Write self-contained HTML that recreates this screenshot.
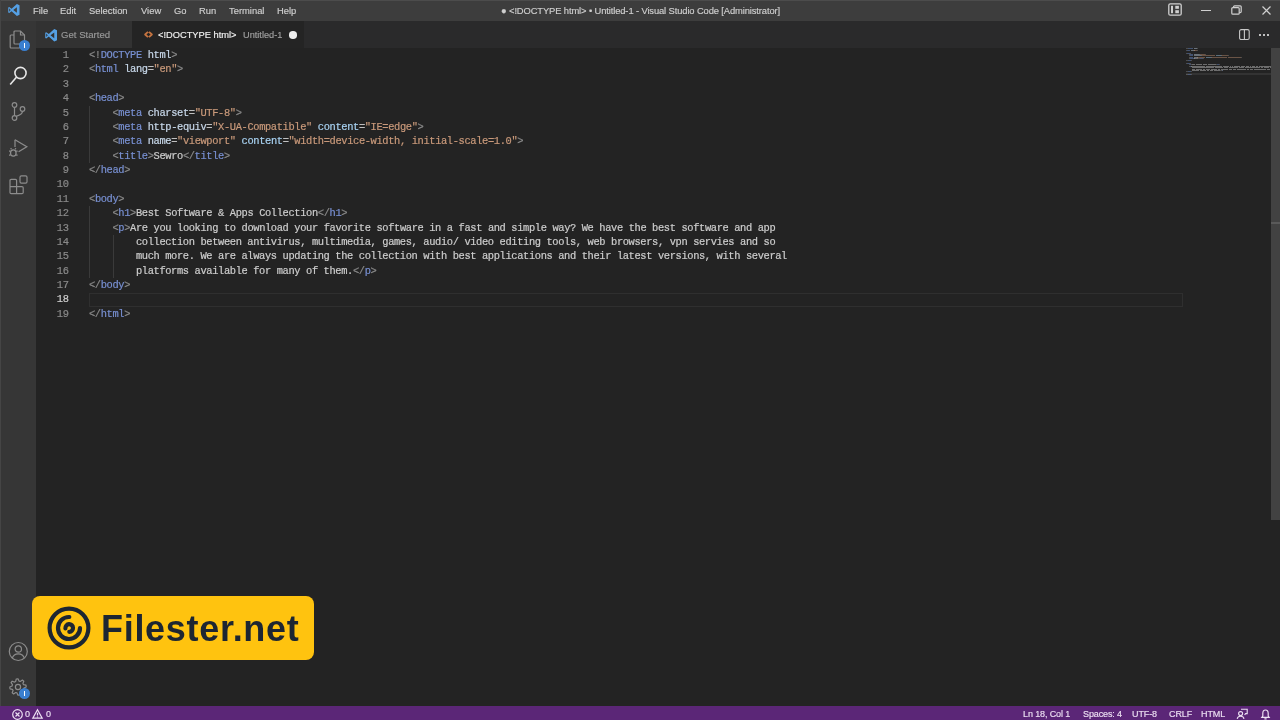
<!DOCTYPE html>
<html><head><meta charset="utf-8">
<style>
*{margin:0;padding:0;box-sizing:border-box}
html,body{width:1280px;height:720px;overflow:hidden;background:#232323;font-family:"Liberation Sans",sans-serif}
.abs{position:absolute}
svg{position:absolute;overflow:visible}
.menu,#ttl,.tabt,.ln,.num,.st,#logotxt{will-change:transform}
.ln,.num{-webkit-text-stroke:0.2px}
.menu,#ttl,.tabt,.st{-webkit-text-stroke:0.15px}
#title{position:absolute;left:0;top:0;width:1280px;height:21px;background:#3d3d3d;border-top:1px solid #4c4c4c}
.menu{position:absolute;top:4.5px;font-size:9.4px;color:#cfcfcf;line-height:12px}
#ttl{position:absolute;top:4.5px;left:501px;font-size:9.4px;letter-spacing:-0.12px;color:#cfcfcf;line-height:12px;white-space:nowrap}
#act{position:absolute;left:0;top:21px;width:37px;height:685px;background:#363636;border-right:1px solid #2d2d2d}
#actl{position:absolute;left:0;top:0;width:1px;height:706px;background:#454545}
#tabs{position:absolute;left:36px;top:21px;width:1244px;height:27px;background:#2a2a2b}
#tab1{position:absolute;left:36px;top:21px;width:96px;height:27px;background:#323232}
#tab2{position:absolute;left:132px;top:21px;width:172px;height:27px;background:#242424}
.tabt{position:absolute;top:29px;font-size:10.2px;line-height:12px;white-space:nowrap}
#editor{position:absolute;left:36px;top:48px;width:1244px;height:658px;background:#232323}
.ln{position:absolute;left:89px;font-family:"Liberation Mono",monospace;font-size:10.4px;letter-spacing:-0.37px;line-height:14.375px;height:14.375px;white-space:pre;color:#d4d4d4}
.num{position:absolute;left:38px;width:30.5px;text-align:right;font-family:"Liberation Mono",monospace;font-size:10.4px;letter-spacing:-0.37px;line-height:14.375px;color:#8a8a8a}
.num.cur{color:#d0d0d0}
.b{color:#8a8a8a}.t{color:#7890d2}.a{color:#c8d8ea}.a2{color:#a8d2f2}.s{color:#c9997a}.e{color:#c0c0c0}.x{color:#cdcdcd}
#status{position:absolute;left:0;top:706px;width:1280px;height:14px;background:#5b2677}
.st{position:absolute;top:709px;font-size:9px;letter-spacing:-0.12px;line-height:11px;color:#ecdff2;white-space:nowrap}
#curline{position:absolute;left:88.5px;top:292.5px;width:1094px;height:14.5px;border:1px solid #2f2f2f}
.guide{position:absolute;width:1px;background:#3a3a3a}
#sb{position:absolute;left:1271px;top:48px;width:9px;height:472px;background:#424242}
#sbline{position:absolute;left:1271px;top:221.5px;width:9px;height:2px;background:#5a5a5a}
#logo{position:absolute;left:32px;top:596px;width:282px;height:64px;background:#ffc30f;border-radius:8px}
#logotxt{position:absolute;left:101px;top:604px;font-size:36px;letter-spacing:0.7px;font-weight:bold;color:#1d2632;line-height:50px;white-space:nowrap}
.mm{position:absolute;height:1px;opacity:0.45}
</style></head><body>
<div id="title"></div>
<svg style="left:8px;top:3.8px" width="12" height="12" viewBox="0 0 100 100">
<path d="M96 10 L74 0 L30 40 L10 25 L2 29 L2 71 L10 75 L30 60 L74 100 L96 90 Z M74 27 L74 73 L44 50 Z M10 36 L22 50 L10 64 Z" fill="#55a0e4" fill-rule="evenodd"/>
</svg>
<div class="menu" style="left:33px">File</div>
<div class="menu" style="left:60px">Edit</div>
<div class="menu" style="left:88.5px">Selection</div>
<div class="menu" style="left:140.5px">View</div>
<div class="menu" style="left:173.5px">Go</div>
<div class="menu" style="left:199px">Run</div>
<div class="menu" style="left:228.5px">Terminal</div>
<div class="menu" style="left:277px">Help</div>
<div id="ttl">● &lt;!DOCTYPE html&gt; • Untitled-1 - Visual Studio Code [Administrator]</div>
<!-- window controls -->
<svg style="left:1168px;top:3px" width="14" height="13" viewBox="0 0 14 13" fill="none" stroke="#cfcfcf" stroke-width="1.3">
<rect x="0.8" y="0.8" width="12.4" height="11.4" rx="1.5"/><rect x="3" y="2.8" width="2" height="7.4" fill="#cfcfcf" stroke="none"/><rect x="7.3" y="2.8" width="3.6" height="3" fill="#cfcfcf" stroke="none"/><rect x="7.3" y="7.2" width="3.6" height="3" fill="#cfcfcf" stroke="none"/>
</svg>
<div class="abs" style="left:1201px;top:9.5px;width:9.5px;height:1.2px;background:#cfcfcf"></div>
<svg style="left:1231px;top:5px" width="11" height="10" viewBox="0 0 11 10" fill="none" stroke="#cfcfcf" stroke-width="1.2">
<rect x="0.8" y="2.6" width="7.4" height="6.6" rx="1"/><path d="M2.6 2.6 V1.8 Q2.6 0.8 3.6 0.8 H9.2 Q10.2 0.8 10.2 1.8 V6.6 Q10.2 7.6 9.2 7.6 H8.2"/>
</svg>
<svg style="left:1262px;top:5.5px" width="9" height="9" viewBox="0 0 9 9" stroke="#cfcfcf" stroke-width="1.2"><path d="M0.5 0.5 L8.5 8.5 M8.5 0.5 L0.5 8.5"/></svg>

<div id="act"></div>
<div id="actl"></div>
<div id="tabs"></div>
<div id="tab1"></div>
<div id="tab2"></div>
<svg style="left:44.5px;top:29px" width="12.5" height="12.5" viewBox="0 0 100 100">
<path d="M96 10 L74 0 L30 40 L10 25 L2 29 L2 71 L10 75 L30 60 L74 100 L96 90 Z M74 27 L74 73 L44 50 Z M10 36 L22 50 L10 64 Z" fill="#55a0e4" fill-rule="evenodd"/>
</svg>
<div class="tabt" style="left:61px;color:#999999;font-size:9.6px">Get Started</div>
<svg style="left:143.5px;top:30.8px" width="9" height="7" viewBox="0 0 9 7" fill="none" stroke="#c47340" stroke-width="1.8" stroke-linejoin="round"><path d="M4 0.9 L1.1 3.5 L4 6.1 M5 0.9 L7.9 3.5 L5 6.1"/></svg>
<div class="tabt" style="left:158px;color:#f2f2f2;font-size:9.3px">&lt;!DOCTYPE html&gt;</div>
<div class="tabt" style="left:243px;color:#a0a0a0;font-size:9.2px">Untitled-1</div>
<div class="abs" style="left:289px;top:31px;width:7.5px;height:7.5px;border-radius:50%;background:#eeeeee"></div>
<!-- split + more -->
<svg style="left:1239.2px;top:28.8px" width="11" height="11" viewBox="0 0 11 11" fill="none" stroke="#c8c8c8" stroke-width="1.1"><rect x="0.6" y="0.6" width="9.6" height="9.9" rx="1.6"/><path d="M5.4 0.6 V10.5"/></svg>
<div class="abs" style="left:1259.2px;top:34px;width:1.8px;height:1.8px;background:#c0c0c0"></div>
<div class="abs" style="left:1263.1px;top:34px;width:1.8px;height:1.8px;background:#c0c0c0"></div>
<div class="abs" style="left:1267px;top:34px;width:1.8px;height:1.8px;background:#c0c0c0"></div>

<!-- activity icons -->
<svg style="left:9px;top:30px" width="20" height="20" viewBox="0 0 20 20" fill="none" stroke="#8c8c8c" stroke-width="1.2">
<path d="M5.5 1 H11.5 L15.5 5 V13 Q15.5 14 14.5 14 H6 Q5 14 5 13 V2 Q5 1 6 1 Z"/><path d="M11.5 1 V5 H15.5"/><path d="M5 5 H2 Q1.2 5 1.2 6 V17 Q1.2 18 2 18 H10 Q11 18 11 17 V14"/>
</svg>
<div class="abs" style="left:19px;top:40px;width:11px;height:11px;border-radius:50%;background:#3a7fd0"></div>
<div class="abs" style="left:23.8px;top:43px;width:1.4px;height:5px;background:#ffffff"></div>
<svg style="left:9px;top:66px" width="18" height="20" viewBox="0 0 18 20" fill="none" stroke="#e6e6e6" stroke-width="1.6">
<circle cx="11.5" cy="7" r="5.6"/><path d="M7.6 11 L1.2 18.6"/>
</svg>
<svg style="left:10px;top:100px" width="16" height="22" viewBox="0 0 16 22" fill="none" stroke="#8c8c8c" stroke-width="1.2">
<circle cx="4.5" cy="5" r="2.3"/><circle cx="4.5" cy="18" r="2.3"/><circle cx="12.5" cy="9" r="2.3"/><path d="M4.5 7.3 V15.7 M12.5 11.3 Q12.5 14.5 6.2 16.4"/>
</svg>
<svg style="left:7.2px;top:137px" width="22" height="20" viewBox="0 0 22 20" fill="none" stroke="#8c8c8c" stroke-width="1.25">
<path d="M8 2.8 L19.8 9.8 L11.6 14.8"/><path d="M8 2.8 V10"/><ellipse cx="6.3" cy="16" rx="2.8" ry="3.2"/><path d="M2 14 H3.5 M2 18 H3.5 M9.1 14 H10.6 M9.1 18 H10.6 M4.5 12.2 L3.6 11.3 M8.1 12.2 L9 11.3"/>
</svg>
<svg style="left:9px;top:175px" width="20" height="20" viewBox="0 0 20 20" fill="none" stroke="#8c8c8c" stroke-width="1.2">
<path d="M1 12 V5.6 Q1 4.4 2.2 4.4 H6.4 Q7.6 4.4 7.6 5.6 V18.6 H2.2 Q1 18.6 1 17.4 Z M1 11.6 H13 Q14.2 11.6 14.2 12.8 V17.4 Q14.2 18.6 13 18.6 H7.6"/><rect x="11" y="0.8" width="7" height="7.4" rx="1.4"/>
</svg>
<svg style="left:8px;top:641px" width="21" height="21" viewBox="0 0 21 21" fill="none" stroke="#8c8c8c" stroke-width="1.2">
<circle cx="10.3" cy="10.5" r="9"/><circle cx="10.3" cy="8" r="3.2"/><path d="M4.3 17.2 Q5.5 12.8 10.3 12.8 Q15.1 12.8 16.3 17.2"/>
</svg>
<svg style="left:7.5px;top:677px" width="20" height="20" viewBox="0 0 20 20" fill="none" stroke="#8c8c8c" stroke-width="1.2" stroke-linejoin="round">
<path d="M15.54 7.70 L18.00 8.21 L18.20 10.00 L15.91 11.03 L15.54 12.30 L16.92 14.39 L15.80 15.80 L13.45 14.91 L12.30 15.54 L11.79 18.00 L10.00 18.20 L8.97 15.91 L7.70 15.54 L5.61 16.92 L4.20 15.80 L5.09 13.45 L4.46 12.30 L2.00 11.79 L1.80 10.00 L4.09 8.97 L4.46 7.70 L3.08 5.61 L4.20 4.20 L6.55 5.09 L7.70 4.46 L8.21 2.00 L10.00 1.80 L11.03 4.09 L12.30 4.46 L14.39 3.08 L15.80 4.20 L14.91 6.55 Z"/><circle cx="10" cy="10" r="2.6"/>
</svg>
<div class="abs" style="left:19px;top:688px;width:11px;height:11px;border-radius:50%;background:#3a7fd0"></div>
<div class="abs" style="left:23.8px;top:691px;width:1.4px;height:5px;background:#ffffff"></div>

<div id="editor"></div>
<div id="curline"></div>
<div class="guide" style="left:89px;top:105.5px;height:57.5px"></div>
<div class="guide" style="left:89px;top:206px;height:72px"></div>
<div class="guide" style="left:112.5px;top:235px;height:43px"></div>
<div class="num" style="top:48.100px">1</div>
<div class="num" style="top:62.475px">2</div>
<div class="num" style="top:76.850px">3</div>
<div class="num" style="top:91.225px">4</div>
<div class="num" style="top:105.600px">5</div>
<div class="num" style="top:119.975px">6</div>
<div class="num" style="top:134.350px">7</div>
<div class="num" style="top:148.725px">8</div>
<div class="num" style="top:163.100px">9</div>
<div class="num" style="top:177.475px">10</div>
<div class="num" style="top:191.850px">11</div>
<div class="num" style="top:206.225px">12</div>
<div class="num" style="top:220.600px">13</div>
<div class="num" style="top:234.975px">14</div>
<div class="num" style="top:249.350px">15</div>
<div class="num" style="top:263.725px">16</div>
<div class="num" style="top:278.100px">17</div>
<div class="num cur" style="top:292.475px">18</div>
<div class="num" style="top:306.850px">19</div>
<div class="ln" style="top:48.100px"><span class="b">&lt;!</span><span class="t">DOCTYPE</span><span class="x"> </span><span class="a">html</span><span class="b">&gt;</span></div>
<div class="ln" style="top:62.475px"><span class="b">&lt;</span><span class="t">html</span><span class="x"> </span><span class="a">lang</span><span class="e">=</span><span class="s">"en"</span><span class="b">&gt;</span></div>
<div class="ln" style="top:76.850px"></div>
<div class="ln" style="top:91.225px"><span class="b">&lt;</span><span class="t">head</span><span class="b">&gt;</span></div>
<div class="ln" style="top:105.600px"><span class="x">    </span><span class="b">&lt;</span><span class="t">meta</span><span class="x"> </span><span class="a">charset</span><span class="e">=</span><span class="s">"UTF-8"</span><span class="b">&gt;</span></div>
<div class="ln" style="top:119.975px"><span class="x">    </span><span class="b">&lt;</span><span class="t">meta</span><span class="x"> </span><span class="a">http-equiv</span><span class="e">=</span><span class="s">"X-UA-Compatible"</span><span class="x"> </span><span class="a2">content</span><span class="e">=</span><span class="s">"IE=edge"</span><span class="b">&gt;</span></div>
<div class="ln" style="top:134.350px"><span class="x">    </span><span class="b">&lt;</span><span class="t">meta</span><span class="x"> </span><span class="a">name</span><span class="e">=</span><span class="s">"viewport"</span><span class="x"> </span><span class="a2">content</span><span class="e">=</span><span class="s">"width=device-width, initial-scale=1.0"</span><span class="b">&gt;</span></div>
<div class="ln" style="top:148.725px"><span class="x">    </span><span class="b">&lt;</span><span class="t">title</span><span class="b">&gt;</span><span class="x">Sewro</span><span class="b">&lt;/</span><span class="t">title</span><span class="b">&gt;</span></div>
<div class="ln" style="top:163.100px"><span class="b">&lt;/</span><span class="t">head</span><span class="b">&gt;</span></div>
<div class="ln" style="top:177.475px"></div>
<div class="ln" style="top:191.850px"><span class="b">&lt;</span><span class="t">body</span><span class="b">&gt;</span></div>
<div class="ln" style="top:206.225px"><span class="x">    </span><span class="b">&lt;</span><span class="t">h1</span><span class="b">&gt;</span><span class="x">Best Software &amp; Apps Collection</span><span class="b">&lt;/</span><span class="t">h1</span><span class="b">&gt;</span></div>
<div class="ln" style="top:220.600px"><span class="x">    </span><span class="b">&lt;</span><span class="t">p</span><span class="b">&gt;</span><span class="x">Are you looking to download your favorite software in a fast and simple way? We have the best software and app</span></div>
<div class="ln" style="top:234.975px"><span class="x">        collection between antivirus, multimedia, games, audio/ video editing tools, web browsers, vpn servies and so</span></div>
<div class="ln" style="top:249.350px"><span class="x">        much more. We are always updating the collection with best applications and their latest versions, with several</span></div>
<div class="ln" style="top:263.725px"><span class="x">        platforms available for many of them.</span><span class="b">&lt;/</span><span class="t">p</span><span class="b">&gt;</span></div>
<div class="ln" style="top:278.100px"><span class="b">&lt;/</span><span class="t">body</span><span class="b">&gt;</span></div>
<div class="ln" style="top:292.475px"></div>
<div class="ln" style="top:306.850px"><span class="b">&lt;/</span><span class="t">html</span><span class="b">&gt;</span></div>

<div class="abs" style="left:1186px;top:73.3px;width:85px;height:1.5px;background:#333333"></div>
<div class="mm" style="left:1186.00px;top:48.20px;width:1.51px;background:#808080"></div>
<div class="mm" style="left:1187.51px;top:48.20px;width:5.30px;background:#6a8fd0"></div>
<div class="mm" style="left:1193.57px;top:48.20px;width:3.03px;background:#c0d0e0"></div>
<div class="mm" style="left:1196.60px;top:48.20px;width:0.76px;background:#808080"></div>
<div class="mm" style="left:1186.00px;top:49.65px;width:0.76px;background:#808080"></div>
<div class="mm" style="left:1186.76px;top:49.65px;width:3.03px;background:#6a8fd0"></div>
<div class="mm" style="left:1190.54px;top:49.65px;width:3.03px;background:#c0d0e0"></div>
<div class="mm" style="left:1193.57px;top:49.65px;width:0.76px;background:#c0c0c0"></div>
<div class="mm" style="left:1194.33px;top:49.65px;width:3.03px;background:#c09070"></div>
<div class="mm" style="left:1197.36px;top:49.65px;width:0.76px;background:#808080"></div>
<div class="mm" style="left:1186.00px;top:52.55px;width:0.76px;background:#808080"></div>
<div class="mm" style="left:1186.76px;top:52.55px;width:3.03px;background:#6a8fd0"></div>
<div class="mm" style="left:1189.79px;top:52.55px;width:0.76px;background:#808080"></div>
<div class="mm" style="left:1189.03px;top:54.00px;width:0.76px;background:#808080"></div>
<div class="mm" style="left:1189.79px;top:54.00px;width:3.03px;background:#6a8fd0"></div>
<div class="mm" style="left:1193.57px;top:54.00px;width:5.30px;background:#c0d0e0"></div>
<div class="mm" style="left:1198.87px;top:54.00px;width:0.76px;background:#c0c0c0"></div>
<div class="mm" style="left:1199.63px;top:54.00px;width:5.30px;background:#c09070"></div>
<div class="mm" style="left:1204.92px;top:54.00px;width:0.76px;background:#808080"></div>
<div class="mm" style="left:1189.03px;top:55.45px;width:0.76px;background:#808080"></div>
<div class="mm" style="left:1189.79px;top:55.45px;width:3.03px;background:#6a8fd0"></div>
<div class="mm" style="left:1193.57px;top:55.45px;width:7.57px;background:#c0d0e0"></div>
<div class="mm" style="left:1201.14px;top:55.45px;width:0.76px;background:#c0c0c0"></div>
<div class="mm" style="left:1201.90px;top:55.45px;width:12.87px;background:#c09070"></div>
<div class="mm" style="left:1215.52px;top:55.45px;width:5.30px;background:#a0cce8"></div>
<div class="mm" style="left:1220.82px;top:55.45px;width:0.76px;background:#c0c0c0"></div>
<div class="mm" style="left:1221.58px;top:55.45px;width:6.81px;background:#c09070"></div>
<div class="mm" style="left:1228.39px;top:55.45px;width:0.76px;background:#808080"></div>
<div class="mm" style="left:1189.03px;top:56.90px;width:0.76px;background:#808080"></div>
<div class="mm" style="left:1189.79px;top:56.90px;width:3.03px;background:#6a8fd0"></div>
<div class="mm" style="left:1193.57px;top:56.90px;width:3.03px;background:#c0d0e0"></div>
<div class="mm" style="left:1196.60px;top:56.90px;width:0.76px;background:#c0c0c0"></div>
<div class="mm" style="left:1197.36px;top:56.90px;width:7.57px;background:#c09070"></div>
<div class="mm" style="left:1205.68px;top:56.90px;width:5.30px;background:#a0cce8"></div>
<div class="mm" style="left:1210.98px;top:56.90px;width:0.76px;background:#c0c0c0"></div>
<div class="mm" style="left:1211.74px;top:56.90px;width:15.14px;background:#c09070"></div>
<div class="mm" style="left:1227.63px;top:56.90px;width:13.63px;background:#c09070"></div>
<div class="mm" style="left:1241.26px;top:56.90px;width:0.76px;background:#808080"></div>
<div class="mm" style="left:1189.03px;top:58.35px;width:0.76px;background:#808080"></div>
<div class="mm" style="left:1189.79px;top:58.35px;width:3.79px;background:#6a8fd0"></div>
<div class="mm" style="left:1193.57px;top:58.35px;width:0.76px;background:#808080"></div>
<div class="mm" style="left:1194.33px;top:58.35px;width:3.79px;background:#c8c8c8"></div>
<div class="mm" style="left:1198.11px;top:58.35px;width:1.51px;background:#808080"></div>
<div class="mm" style="left:1199.63px;top:58.35px;width:3.79px;background:#6a8fd0"></div>
<div class="mm" style="left:1203.41px;top:58.35px;width:0.76px;background:#808080"></div>
<div class="mm" style="left:1186.00px;top:59.80px;width:1.51px;background:#808080"></div>
<div class="mm" style="left:1187.51px;top:59.80px;width:3.03px;background:#6a8fd0"></div>
<div class="mm" style="left:1190.54px;top:59.80px;width:0.76px;background:#808080"></div>
<div class="mm" style="left:1186.00px;top:62.70px;width:0.76px;background:#808080"></div>
<div class="mm" style="left:1186.76px;top:62.70px;width:3.03px;background:#6a8fd0"></div>
<div class="mm" style="left:1189.79px;top:62.70px;width:0.76px;background:#808080"></div>
<div class="mm" style="left:1189.03px;top:64.15px;width:0.76px;background:#808080"></div>
<div class="mm" style="left:1189.79px;top:64.15px;width:1.51px;background:#6a8fd0"></div>
<div class="mm" style="left:1191.30px;top:64.15px;width:0.76px;background:#808080"></div>
<div class="mm" style="left:1192.06px;top:64.15px;width:3.03px;background:#c8c8c8"></div>
<div class="mm" style="left:1195.84px;top:64.15px;width:6.06px;background:#c8c8c8"></div>
<div class="mm" style="left:1202.65px;top:64.15px;width:0.76px;background:#c8c8c8"></div>
<div class="mm" style="left:1204.17px;top:64.15px;width:3.03px;background:#c8c8c8"></div>
<div class="mm" style="left:1207.95px;top:64.15px;width:7.57px;background:#c8c8c8"></div>
<div class="mm" style="left:1215.52px;top:64.15px;width:1.51px;background:#808080"></div>
<div class="mm" style="left:1217.04px;top:64.15px;width:1.51px;background:#6a8fd0"></div>
<div class="mm" style="left:1218.55px;top:64.15px;width:0.76px;background:#808080"></div>
<div class="mm" style="left:1189.03px;top:65.60px;width:0.76px;background:#808080"></div>
<div class="mm" style="left:1189.79px;top:65.60px;width:0.76px;background:#6a8fd0"></div>
<div class="mm" style="left:1190.54px;top:65.60px;width:0.76px;background:#808080"></div>
<div class="mm" style="left:1191.30px;top:65.60px;width:2.27px;background:#c8c8c8"></div>
<div class="mm" style="left:1194.33px;top:65.60px;width:2.27px;background:#c8c8c8"></div>
<div class="mm" style="left:1197.36px;top:65.60px;width:5.30px;background:#c8c8c8"></div>
<div class="mm" style="left:1203.41px;top:65.60px;width:1.51px;background:#c8c8c8"></div>
<div class="mm" style="left:1205.68px;top:65.60px;width:6.06px;background:#c8c8c8"></div>
<div class="mm" style="left:1212.49px;top:65.60px;width:3.03px;background:#c8c8c8"></div>
<div class="mm" style="left:1216.28px;top:65.60px;width:6.06px;background:#c8c8c8"></div>
<div class="mm" style="left:1223.09px;top:65.60px;width:6.06px;background:#c8c8c8"></div>
<div class="mm" style="left:1229.91px;top:65.60px;width:1.51px;background:#c8c8c8"></div>
<div class="mm" style="left:1232.18px;top:65.60px;width:0.76px;background:#c8c8c8"></div>
<div class="mm" style="left:1233.69px;top:65.60px;width:3.03px;background:#c8c8c8"></div>
<div class="mm" style="left:1237.48px;top:65.60px;width:2.27px;background:#c8c8c8"></div>
<div class="mm" style="left:1240.50px;top:65.60px;width:4.54px;background:#c8c8c8"></div>
<div class="mm" style="left:1245.80px;top:65.60px;width:3.03px;background:#c8c8c8"></div>
<div class="mm" style="left:1249.59px;top:65.60px;width:1.51px;background:#c8c8c8"></div>
<div class="mm" style="left:1251.86px;top:65.60px;width:3.03px;background:#c8c8c8"></div>
<div class="mm" style="left:1255.64px;top:65.60px;width:2.27px;background:#c8c8c8"></div>
<div class="mm" style="left:1258.67px;top:65.60px;width:3.03px;background:#c8c8c8"></div>
<div class="mm" style="left:1262.46px;top:65.60px;width:6.06px;background:#c8c8c8"></div>
<div class="mm" style="left:1269.27px;top:65.60px;width:1.73px;background:#c8c8c8"></div>
<div class="mm" style="left:1192.06px;top:67.05px;width:7.57px;background:#c8c8c8"></div>
<div class="mm" style="left:1200.38px;top:67.05px;width:5.30px;background:#c8c8c8"></div>
<div class="mm" style="left:1206.44px;top:67.05px;width:7.57px;background:#c8c8c8"></div>
<div class="mm" style="left:1214.77px;top:67.05px;width:8.33px;background:#c8c8c8"></div>
<div class="mm" style="left:1223.85px;top:67.05px;width:4.54px;background:#c8c8c8"></div>
<div class="mm" style="left:1229.15px;top:67.05px;width:4.54px;background:#c8c8c8"></div>
<div class="mm" style="left:1234.45px;top:67.05px;width:3.79px;background:#c8c8c8"></div>
<div class="mm" style="left:1238.99px;top:67.05px;width:5.30px;background:#c8c8c8"></div>
<div class="mm" style="left:1245.05px;top:67.05px;width:4.54px;background:#c8c8c8"></div>
<div class="mm" style="left:1250.35px;top:67.05px;width:2.27px;background:#c8c8c8"></div>
<div class="mm" style="left:1253.37px;top:67.05px;width:6.81px;background:#c8c8c8"></div>
<div class="mm" style="left:1260.94px;top:67.05px;width:2.27px;background:#c8c8c8"></div>
<div class="mm" style="left:1263.97px;top:67.05px;width:5.30px;background:#c8c8c8"></div>
<div class="mm" style="left:1270.03px;top:67.05px;width:0.97px;background:#c8c8c8"></div>
<div class="mm" style="left:1192.06px;top:68.50px;width:3.03px;background:#c8c8c8"></div>
<div class="mm" style="left:1195.84px;top:68.50px;width:3.79px;background:#c8c8c8"></div>
<div class="mm" style="left:1200.38px;top:68.50px;width:1.51px;background:#c8c8c8"></div>
<div class="mm" style="left:1202.65px;top:68.50px;width:2.27px;background:#c8c8c8"></div>
<div class="mm" style="left:1205.68px;top:68.50px;width:4.54px;background:#c8c8c8"></div>
<div class="mm" style="left:1210.98px;top:68.50px;width:6.06px;background:#c8c8c8"></div>
<div class="mm" style="left:1217.79px;top:68.50px;width:2.27px;background:#c8c8c8"></div>
<div class="mm" style="left:1220.82px;top:68.50px;width:7.57px;background:#c8c8c8"></div>
<div class="mm" style="left:1229.15px;top:68.50px;width:3.03px;background:#c8c8c8"></div>
<div class="mm" style="left:1232.93px;top:68.50px;width:3.03px;background:#c8c8c8"></div>
<div class="mm" style="left:1236.72px;top:68.50px;width:9.08px;background:#c8c8c8"></div>
<div class="mm" style="left:1246.56px;top:68.50px;width:2.27px;background:#c8c8c8"></div>
<div class="mm" style="left:1249.59px;top:68.50px;width:3.79px;background:#c8c8c8"></div>
<div class="mm" style="left:1254.13px;top:68.50px;width:4.54px;background:#c8c8c8"></div>
<div class="mm" style="left:1259.43px;top:68.50px;width:6.81px;background:#c8c8c8"></div>
<div class="mm" style="left:1267.00px;top:68.50px;width:3.03px;background:#c8c8c8"></div>
<div class="mm" style="left:1270.78px;top:68.50px;width:0.22px;background:#c8c8c8"></div>
<div class="mm" style="left:1192.06px;top:69.95px;width:6.81px;background:#c8c8c8"></div>
<div class="mm" style="left:1199.63px;top:69.95px;width:6.81px;background:#c8c8c8"></div>
<div class="mm" style="left:1207.20px;top:69.95px;width:2.27px;background:#c8c8c8"></div>
<div class="mm" style="left:1210.22px;top:69.95px;width:3.03px;background:#c8c8c8"></div>
<div class="mm" style="left:1214.01px;top:69.95px;width:1.51px;background:#c8c8c8"></div>
<div class="mm" style="left:1216.28px;top:69.95px;width:3.79px;background:#c8c8c8"></div>
<div class="mm" style="left:1220.07px;top:69.95px;width:1.51px;background:#808080"></div>
<div class="mm" style="left:1221.58px;top:69.95px;width:0.76px;background:#6a8fd0"></div>
<div class="mm" style="left:1222.34px;top:69.95px;width:0.76px;background:#808080"></div>
<div class="mm" style="left:1186.00px;top:71.40px;width:1.51px;background:#808080"></div>
<div class="mm" style="left:1187.51px;top:71.40px;width:3.03px;background:#6a8fd0"></div>
<div class="mm" style="left:1190.54px;top:71.40px;width:0.76px;background:#808080"></div>
<div class="mm" style="left:1186.00px;top:74.30px;width:1.51px;background:#808080"></div>
<div class="mm" style="left:1187.51px;top:74.30px;width:3.03px;background:#6a8fd0"></div>
<div class="mm" style="left:1190.54px;top:74.30px;width:0.76px;background:#808080"></div>
<div id="sb"></div>
<div id="sbline"></div>

<div id="status"></div>
<svg style="left:11.5px;top:708.5px" width="11" height="11" viewBox="0 0 11 11" fill="none" stroke="#ecdff2" stroke-width="1.2"><circle cx="5.5" cy="5.5" r="4.8"/><path d="M3.5 3.5 L7.5 7.5 M7.5 3.5 L3.5 7.5"/></svg>
<div class="st" style="left:25px">0</div>
<svg style="left:32px;top:709px" width="11" height="10" viewBox="0 0 11 10" fill="none" stroke="#ecdff2" stroke-width="1.2"><path d="M5.5 0.8 L10.2 9.2 H0.8 Z M5.5 3.8 V6.6 M5.5 7.4 V8.2"/></svg>
<div class="st" style="left:45.5px">0</div>
<div class="st" style="left:1023px">Ln 18, Col 1</div>
<div class="st" style="left:1083px">Spaces: 4</div>
<div class="st" style="left:1132px">UTF-8</div>
<div class="st" style="left:1168.5px">CRLF</div>
<div class="st" style="left:1201px">HTML</div>
<svg style="left:1236px;top:708px" width="12" height="11" viewBox="0 0 12 11" fill="none" stroke="#ecdff2" stroke-width="1.1"><path d="M5 1.2 H11.2 V5.6 H9.6 L8.6 7"/><circle cx="4.6" cy="5.6" r="2"/><path d="M1.2 10.8 Q1.6 8.2 4.6 8.2 Q7.6 8.2 8 10.8"/></svg>
<svg style="left:1260.5px;top:708.5px" width="9" height="11" viewBox="0 0 9 11" fill="none" stroke="#ecdff2" stroke-width="1.2"><path d="M0.8 8.4 H8.2 L7.2 7 V4.4 Q7.2 1 4.5 1 Q1.8 1 1.8 4.4 V7 Z M3.4 9.8 H5.6"/></svg>

<div id="logo"></div>
<svg style="left:44.8px;top:603.6px" width="48" height="48" viewBox="-24 -24 48 48" fill="none" stroke="#1d2632" stroke-width="4.2" stroke-linecap="round">
<circle cx="0" cy="0" r="19.4"/><path d="M0.3 -11 A11 11 0 1 0 11 0"/><path d="M-3.6 0.3 A3.8 3.8 0 1 1 0.3 3.8"/>
</svg>
<div id="logotxt">Filester.net</div>
</body></html>
